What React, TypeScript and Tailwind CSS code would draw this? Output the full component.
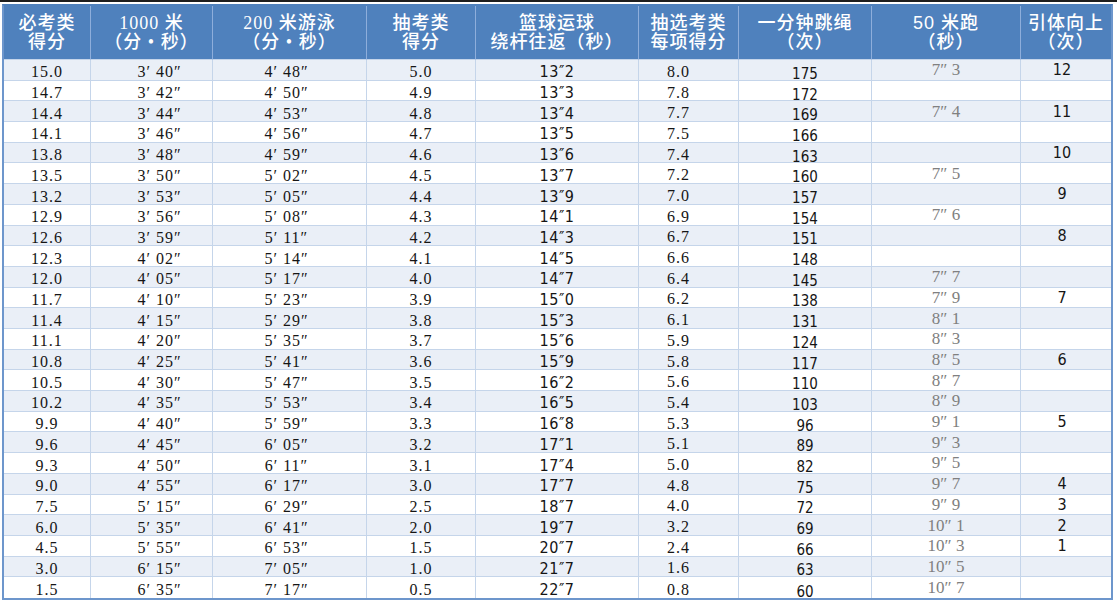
import React from 'react'

type Col = { head: [string, string]; headCls?: string; cls: string }

const cols: Col[] = [
  { head: ['必考类', '得分'], cls: "font-['Liberation_Serif',serif] text-[16px] tracking-[1px] pt-[5px]" },
  { head: ['1000 米', '（分 • 秒）'], cls: "font-['Liberation_Serif',serif] text-[16px] tracking-[1px] pt-[5px] pl-[16px]" },
  { head: ['200 米游泳', '（分 • 秒）'], cls: "font-['Liberation_Serif',serif] text-[16px] tracking-[1px] pt-[5px] pr-[6px]" },
  { head: ['抽考类', '得分'], cls: "font-['Liberation_Serif',serif] text-[16px] tracking-[1px] pt-[5px]" },
  { head: ['篮球运球', '绕杆往返（秒）'], cls: "font-['Liberation_Sans_Narrow','DejaVu_Sans_Condensed','Liberation_Sans',sans-serif] text-[16px] tracking-[0.5px] pt-[5px]" },
  { head: ['抽选考类', '每项得分'], cls: "font-['Liberation_Serif',serif] text-[16px] tracking-[1px] pt-[4px] pr-[20px]" },
  { head: ['一分钟跳绳', '（次）'], cls: "font-['Liberation_Sans_Narrow','DejaVu_Sans_Condensed','Liberation_Sans',sans-serif] text-[15px] pt-[9px]" },
  { head: ['50 米跑', '（秒）'], headCls: "font-['Liberation_Sans','Noto_Sans_CJK_SC',sans-serif]", cls: "font-['Liberation_Serif',serif] text-[17px] text-[#808080]" },
  { head: ['引体向上', '（次）'], cls: "font-['Liberation_Sans_Narrow','DejaVu_Sans_Condensed','Liberation_Sans',sans-serif] text-[16px] pt-[1px] pr-[8px]" },
]

const rows: string[][] = [
  ['15.0', '3′ 40″', '4′ 48″', '5.0', '13″2', '8.0', '175', '7″ 3', '12'],
  ['14.7', '3′ 42″', '4′ 50″', '4.9', '13″3', '7.8', '172', '', ''],
  ['14.4', '3′ 44″', '4′ 53″', '4.8', '13″4', '7.7', '169', '7″ 4', '11'],
  ['14.1', '3′ 46″', '4′ 56″', '4.7', '13″5', '7.5', '166', '', ''],
  ['13.8', '3′ 48″', '4′ 59″', '4.6', '13″6', '7.4', '163', '', '10'],
  ['13.5', '3′ 50″', '5′ 02″', '4.5', '13″7', '7.2', '160', '7″ 5', ''],
  ['13.2', '3′ 53″', '5′ 05″', '4.4', '13″9', '7.0', '157', '', '9'],
  ['12.9', '3′ 56″', '5′ 08″', '4.3', '14″1', '6.9', '154', '7″ 6', ''],
  ['12.6', '3′ 59″', '5′ 11″', '4.2', '14″3', '6.7', '151', '', '8'],
  ['12.3', '4′ 02″', '5′ 14″', '4.1', '14″5', '6.6', '148', '', ''],
  ['12.0', '4′ 05″', '5′ 17″', '4.0', '14″7', '6.4', '145', '7″ 7', ''],
  ['11.7', '4′ 10″', '5′ 23″', '3.9', '15″0', '6.2', '138', '7″ 9', '7'],
  ['11.4', '4′ 15″', '5′ 29″', '3.8', '15″3', '6.1', '131', '8″ 1', ''],
  ['11.1', '4′ 20″', '5′ 35″', '3.7', '15″6', '5.9', '124', '8″ 3', ''],
  ['10.8', '4′ 25″', '5′ 41″', '3.6', '15″9', '5.8', '117', '8″ 5', '6'],
  ['10.5', '4′ 30″', '5′ 47″', '3.5', '16″2', '5.6', '110', '8″ 7', ''],
  ['10.2', '4′ 35″', '5′ 53″', '3.4', '16″5', '5.4', '103', '8″ 9', ''],
  ['9.9', '4′ 40″', '5′ 59″', '3.3', '16″8', '5.3', '96', '9″ 1', '5'],
  ['9.6', '4′ 45″', '6′ 05″', '3.2', '17″1', '5.1', '89', '9″ 3', ''],
  ['9.3', '4′ 50″', '6′ 11″', '3.1', '17″4', '5.0', '82', '9″ 5', ''],
  ['9.0', '4′ 55″', '6′ 17″', '3.0', '17″7', '4.8', '75', '9″ 7', '4'],
  ['7.5', '5′ 15″', '6′ 29″', '2.5', '18″7', '4.0', '72', '9″ 9', '3'],
  ['6.0', '5′ 35″', '6′ 41″', '2.0', '19″7', '3.2', '69', '10″ 1', '2'],
  ['4.5', '5′ 55″', '6′ 53″', '1.5', '20″7', '2.4', '66', '10″ 3', '1'],
  ['3.0', '6′ 15″', '7′ 05″', '1.0', '21″7', '1.6', '63', '10″ 5', ''],
  ['1.5', '6′ 35″', '7′ 17″', '0.5', '22″7', '0.8', '60', '10″ 7', ''],
]

export default function App() {
  return (
    <div className="w-[1117px] h-[602px] bg-white overflow-hidden">
      <div className="h-[2px] bg-[#1e1e1e]" />
      <div className="pl-[2px] pt-[2px]">
        <div className="grid w-[1111px] h-[596px] grid-cols-[87px_122px_154px_109px_163px_100px_133px_149px_90px] grid-rows-[54px_repeat(26,minmax(0,1fr))] border-2 border-[#6d96cc] border-t-[#4f81bd] text-[#151515]">
          {cols.map((c, i) => (
            <div
              key={'h' + i}
              className={`flex flex-col items-center justify-center bg-[#4f81bd] text-white text-[18px] leading-[19px] tracking-[1px] font-medium border-b border-[#c5d5ea] ${i < cols.length - 1 ? 'border-r border-r-[#8eaedb]' : ''} ${c.headCls ?? "font-['Liberation_Serif','Noto_Sans_CJK_SC',serif]"}`}
            >
              <span className="whitespace-nowrap">{c.head[0]}</span>
              <span className="whitespace-nowrap">{c.head[1]}</span>
            </div>
          ))}
          {rows.map((r, ri) =>
            r.map((v, ci) => (
              <div
                key={ri + '-' + ci}
                className={`flex items-center justify-center leading-none whitespace-pre border-[#c5d5ea] ${ri % 2 === 0 ? 'bg-[#eaeff7]' : 'bg-white'} ${ci < 8 ? 'border-r' : ''} ${ri < rows.length - 1 ? 'border-b' : ''} ${cols[ci].cls}`}
              >
                {v}
              </div>
            ))
          )}
        </div>
      </div>
    </div>
  )
}
